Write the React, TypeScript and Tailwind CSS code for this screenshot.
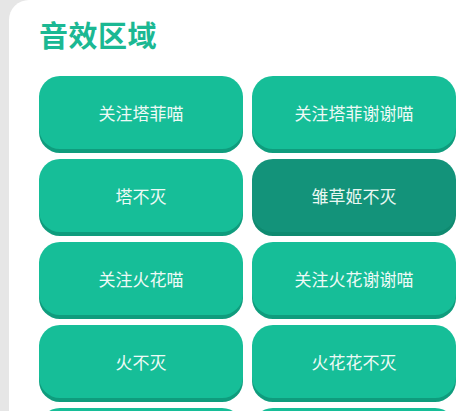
import React from "react";

const items = [
  { label: "关注塔菲喵", dark: false },
  { label: "关注塔菲谢谢喵", dark: false },
  { label: "塔不灭", dark: false },
  { label: "雏草姬不灭", dark: true },
  { label: "关注火花喵", dark: false },
  { label: "关注火花谢谢喵", dark: false },
  { label: "火不灭", dark: false },
  { label: "火花花不灭", dark: false },
  { label: "", dark: false },
  { label: "", dark: false },
];

export default function App() {
  return (
    <div
      className="w-[475px] h-[411px] overflow-hidden bg-[#e6e6e6] pl-[9px]"
      style={{ fontFamily: '"Noto Sans CJK SC", "Noto Sans", sans-serif' }}
    >
      <div className="h-full bg-white rounded-tl-[20px] pl-[30px] pr-[19px] pt-[14px]">
        <h1 className="text-[29px] leading-[40px] font-bold text-[#1bb893] tracking-[0.5px]">
          音效区域
        </h1>
        <div className="mt-[22px] grid grid-cols-2 gap-x-[9px] gap-y-[10px]">
          {items.map((it, i) => (
            <button
              key={i}
              className={
                it.dark
                  ? "h-[73px] rounded-[21px] bg-[#13937a] shadow-[0_4px_0_#0f8a70] text-[#e9f7f2] text-[17px] flex items-center justify-center"
                  : "h-[73px] rounded-[21px] bg-[#16be98] shadow-[0_4px_0_#0f9c7d] text-[#eefaf6] text-[17px] flex items-center justify-center"
              }
            >
              {it.label}
            </button>
          ))}
        </div>
      </div>
    </div>
  );
}
